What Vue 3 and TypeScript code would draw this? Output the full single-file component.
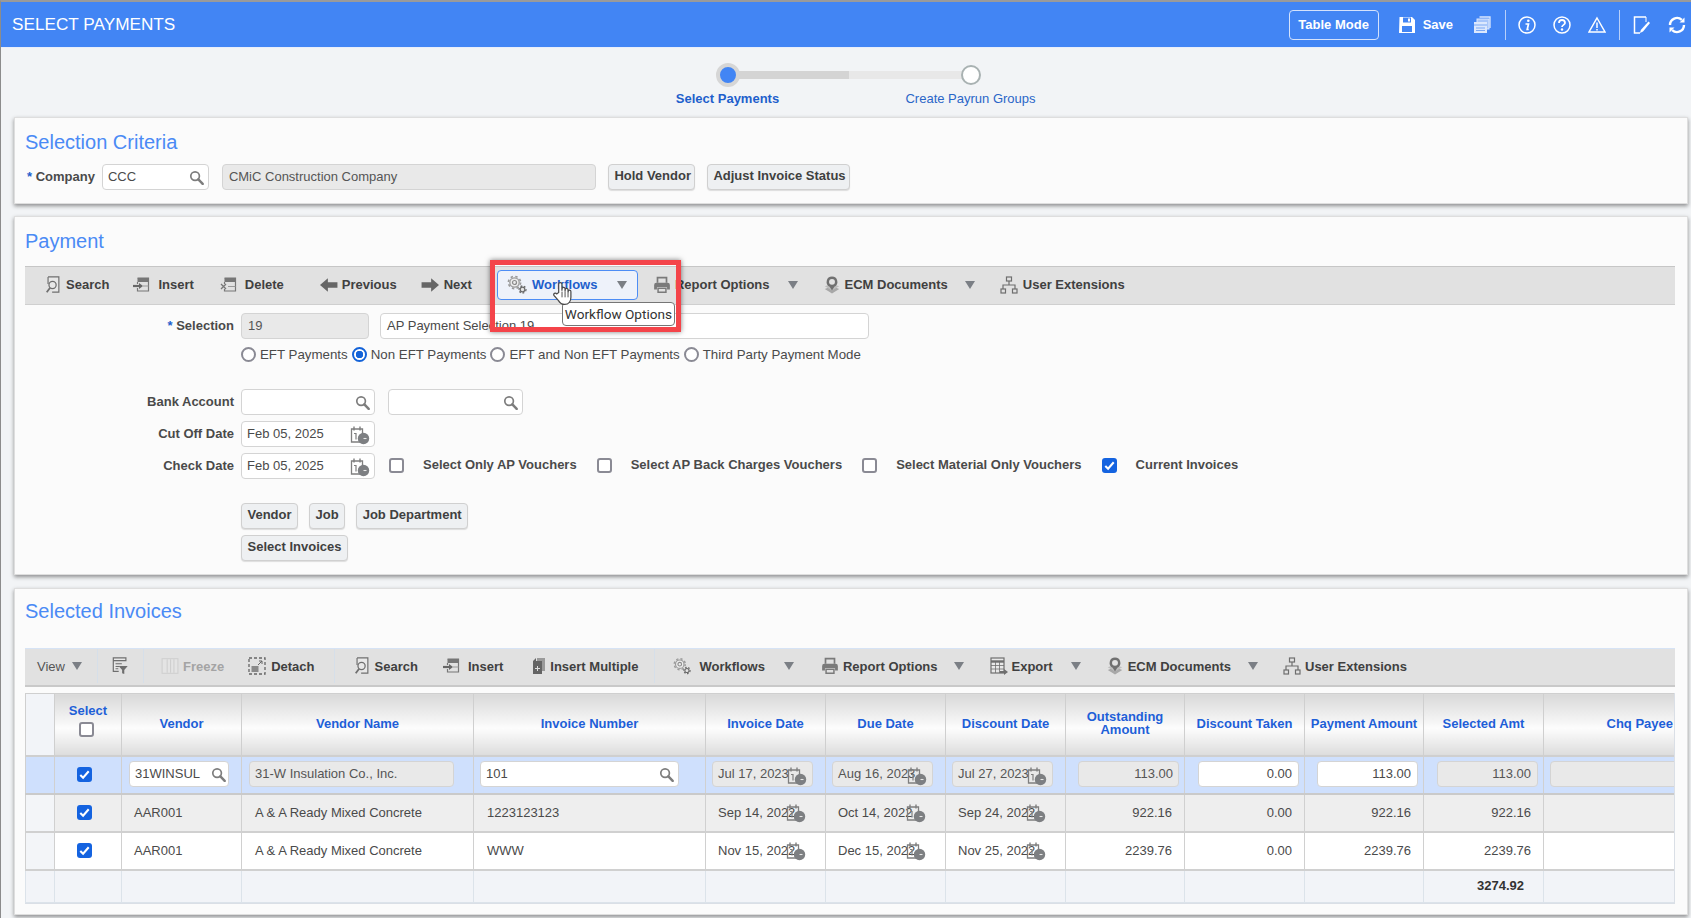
<script setup lang="ts">
interface ToolItem {
  ml: number;
  icon?: string;
  iw?: number;
  label?: string;
  caret?: number;
  sep?: boolean;
  muted?: boolean;
}

// ml = space before the item, iw = slot for the icon, caret = space before the arrow
const paymentTools: ToolItem[] = [
  { ml: 19, icon: 'i-docsearch', iw: 22, label: 'Search' },
  { ml: 24, icon: 'i-insert', iw: 25, label: 'Insert' },
  { ml: 26, icon: 'i-delete', iw: 25, label: 'Delete' },
  { ml: 36, icon: 'i-left', iw: 22, label: 'Previous' },
  { ml: 24, icon: 'i-right', iw: 23, label: 'Next' },
];

const paymentToolsEnd: ToolItem[] = [
  { ml: 15, icon: 'i-print', iw: 22, label: 'Report Options', caret: 18 },
  { ml: 25, icon: 'i-ecm', iw: 22, label: 'ECM Documents', caret: 17 },
  { ml: 25, icon: 'i-ue', iw: 23, label: 'User Extensions' },
];

const invoiceTools: ToolItem[] = [
  { ml: 12, label: 'View', caret: 7 },
  { ml: 15, sep: true },
  { ml: 14, icon: 'i-filter', iw: 17 },
  { ml: 14, sep: true },
  { ml: 17, icon: 'i-freeze', iw: 22, label: 'Freeze', muted: true },
  { ml: 24, icon: 'i-detach', iw: 23, label: 'Detach' },
  { ml: 19, sep: true },
  { ml: 18, icon: 'i-docsearch', iw: 22, label: 'Search' },
  { ml: 25, icon: 'i-insert', iw: 25, label: 'Insert' },
  { ml: 27, icon: 'i-multi', iw: 20, label: 'Insert Multiple' },
  { ml: 16, sep: true },
  { ml: 18, icon: 'i-gears', iw: 26, label: 'Workflows', caret: 19 },
  { ml: 27, icon: 'i-print', iw: 22, label: 'Report Options', caret: 16 },
  { ml: 26, icon: 'i-export', iw: 22, label: 'Export', caret: 18 },
  { ml: 25, icon: 'i-ecm', iw: 22, label: 'ECM Documents', caret: 17 },
  { ml: 25, icon: 'i-ue', iw: 22, label: 'User Extensions' },
];

const paymentModes = [
  { label: 'EFT Payments', on: false },
  { label: 'Non EFT Payments', on: true },
  { label: 'EFT and Non EFT Payments', on: false },
  { label: 'Third Party Payment Mode', on: false },
];

const voucherChecks = [
  { label: 'Select Only AP Vouchers', on: false },
  { label: 'Select AP Back Charges Vouchers', on: false },
  { label: 'Select Material Only Vouchers', on: false },
  { label: 'Current Invoices', on: true },
];

const columnWidths = [29, 67, 120, 232, 232, 120, 120, 120, 119, 120, 119, 120, 132];

const rows = [
  { vendor: 'AAR001', name: 'A & A Ready Mixed Concrete', invoice: '1223123123', invoiceDate: 'Sep 14, 2022', due: 'Oct 14, 2022', discount: 'Sep 24, 2022', outstanding: '922.16', taken: '0.00', payment: '922.16', selected: '922.16' },
  { vendor: 'AAR001', name: 'A & A Ready Mixed Concrete', invoice: 'WWW', invoiceDate: 'Nov 15, 2022', due: 'Dec 15, 2022', discount: 'Nov 25, 2022', outstanding: '2239.76', taken: '0.00', payment: '2239.76', selected: '2239.76' },
];
</script>

<template>
  <div class="page">
    <svg class="sprites" xmlns="http://www.w3.org/2000/svg">
      <symbol id="i-mag" viewBox="0 0 16 16">
        <circle cx="6.5" cy="6.5" r="4.6" fill="none" stroke="#7d7d7d" stroke-width="1.8" />
        <path d="M10 10l4.6 4.8" stroke="#7d7d7d" stroke-width="2.6" stroke-linecap="round" />
      </symbol>
      <symbol id="i-docsearch" viewBox="0 0 18 20">
        <path d="M3.5 1h12v17H8" fill="#e8e8e8" stroke="#6f6f6f" stroke-width="1.3" />
        <path d="M3.5 1v8" stroke="#6f6f6f" stroke-width="1.3" />
        <circle cx="8.5" cy="10" r="4" fill="#e8e8e8" stroke="#6f6f6f" stroke-width="1.4" />
        <path d="M5.8 13L2 18" stroke="#6f6f6f" stroke-width="2" />
      </symbol>
      <symbol id="i-insert" viewBox="0 0 18 18">
        <rect x="4.5" y="2" width="11" height="4" fill="#777" />
        <path d="M4.5 2h11v13h-11v-3M4.5 8V6" fill="none" stroke="#777" stroke-width="1.2" />
        <path d="M0 10h7" stroke="#666" stroke-width="2.2" />
        <path d="M6 7l4 3-4 3z" fill="#666" />
        <path d="M10 10h5.5" stroke="#999" stroke-width="1" />
      </symbol>
      <symbol id="i-delete" viewBox="0 0 18 18">
        <rect x="4.5" y="2" width="11" height="4" fill="#777" />
        <path d="M4.5 2h11v13h-11v-2M4.5 8V6" fill="none" stroke="#777" stroke-width="1.2" />
        <path d="M1 8l5 5M6 8l-5 5" stroke="#777" stroke-width="1.3" />
        <path d="M8 10.5h7.5" stroke="#999" stroke-width="1" />
      </symbol>
      <symbol id="i-left" viewBox="0 0 16 16"><path d="M0 8l7-6v3.5h8.500v5H7V14z" fill="#666" /></symbol>
      <symbol id="i-right" viewBox="0 0 16 16"><path d="M16 8L9 2v3.500H.5v5H9V14z" fill="#666" /></symbol>
      <symbol id="i-gears" viewBox="0 0 20 19">
        <circle cx="7.5" cy="7.5" r="4.7" fill="#ececec" stroke="#9a9a9a" stroke-width="1.300" />
        <circle cx="7.5" cy="7.5" r="6.100" fill="none" stroke="#9a9a9a" stroke-width="1.600" stroke-dasharray="2.400 2.400" />
        <circle cx="7.500" cy="7.500" r="2" fill="none" stroke="#8a8a8a" stroke-width="1.200" />
        <circle cx="15.500" cy="14.500" r="2.300" fill="#e6e6e6" stroke="#6a6a6a" stroke-width="1.200" />
        <circle cx="15.500" cy="14.500" r="3.500" fill="none" stroke="#6a6a6a" stroke-width="1.300" stroke-dasharray="1.800 1.700" />
      </symbol>
      <symbol id="i-print" viewBox="0 0 16 16">
        <path d="M4 6V1.500h8V6" fill="none" stroke="#7a7a7a" stroke-width="1.500" />
        <path d="M3 6h10a2 2 0 012 2v4h-2.500v-2h-9v2H1V8a2 2 0 012-2z" fill="#7a7a7a" />
        <path d="M4.500 11h7v3.500h-7z" fill="none" stroke="#7a7a7a" stroke-width="1.300" />
      </symbol>
      <symbol id="i-ecm" viewBox="0 0 18 20">
        <path d="M1 14.500l8-3.500 8 3.500-8 5z" fill="#a8a8a8" />
        <path d="M1 11.500l8-3 8 3-8 4.500z" fill="#bdbdbd" />
        <path d="M9 .5a6 6 0 00-2.600 11.400L9 16l2.600-4.100A6 6 0 009 .5z" fill="#707070" />
        <circle cx="9" cy="6.500" r="3.300" fill="#e2e2e2" />
      </symbol>
      <symbol id="i-ue" viewBox="0 0 18 18">
        <rect x="6.500" y="1" width="5" height="4" fill="none" stroke="#6e6e6e" stroke-width="1.200" />
        <path d="M9 5v4M3 13V9h12v4" fill="none" stroke="#6e6e6e" stroke-width="1.200" />
        <rect x="1" y="13" width="4.500" height="4" fill="none" stroke="#6e6e6e" stroke-width="1.200" />
        <rect x="12.500" y="13" width="4.500" height="4" fill="none" stroke="#6e6e6e" stroke-width="1.200" />
      </symbol>
      <symbol id="i-filter" viewBox="0 0 18 20">
        <path d="M1 1h14v3H1zM1 4v12h6" fill="#e8e8e8" stroke="#6e6e6e" stroke-width="1.300" />
        <path d="M3.500 7.500h7M3.500 10.500h4M3.500 13h3" stroke="#6e6e6e" stroke-width="1.200" />
        <path d="M7 10h10l-3.800 4.500V19l-2.400-1v-3.500z" fill="#6e6e6e" />
      </symbol>
      <symbol id="i-freeze" viewBox="0 0 16 16">
        <rect x="1" y="1.500" width="14" height="13" fill="#e4e4e4" stroke="#d0d0d0" />
        <path d="M5.500 2v12M8.500 2v12M11.500 2v12" stroke="#cfcfcf" stroke-width="1" />
      </symbol>
      <symbol id="i-detach" viewBox="0 0 18 18">
        <rect x="1" y="1" width="16" height="16" fill="none" stroke="#666" stroke-width="1.300" stroke-dasharray="3 2" />
        <rect x="3.500" y="9" width="7" height="6" fill="#8a8a8a" />
        <path d="M10 8l4-4M11 4h3v3" fill="none" stroke="#666" stroke-width="1" />
      </symbol>
      <symbol id="i-multi" viewBox="0 0 14 18">
        <path d="M5 1h8v13H5z" fill="#9a9a9a" />
        <path d="M4 1L1 4v13h9V4H4z" fill="#646464" />
        <path d="M5.500 9v5M3 11.500h5" stroke="#ddd" stroke-width="1" />
      </symbol>
      <symbol id="i-export" viewBox="0 0 18 18">
        <rect x="1" y="1" width="13" height="15" fill="#e8e8e8" stroke="#6e6e6e" stroke-width="1.200" />
        <path d="M1 4.500h13" stroke="#6e6e6e" stroke-width="2.400" />
        <path d="M5.500 5v11M9.500 5v11M1 8.500h13M1 12h13" stroke="#6e6e6e" stroke-width=".8" />
        <path d="M10 14h4v-2l4 3-4 3v-2h-4z" fill="#6e6e6e" />
      </symbol>
      <symbol id="i-cal" viewBox="0 0 20 20">
        <path d="M1.500 4h11v13h-11z" fill="none" stroke="#7f7f7f" stroke-width="1.300" />
        <path d="M4 1.500v4M10 1.500v4" stroke="#7f7f7f" stroke-width="1.400" />
        <path d="M4 8.500h2v6" fill="none" stroke="#7f7f7f" stroke-width="1.200" />
        <circle cx="13.500" cy="13.500" r="5.700" fill="#7d7f82" />
        <path d="M13.500 13.500h3" stroke="#e8e8e8" stroke-width="1.100" />
      </symbol>
      <symbol id="i-save" viewBox="0 0 18 18">
        <path d="M1.500 1h12.500L17 4v13H1z" fill="#fff" />
        <rect x="5" y="1.500" width="8" height="5" fill="#4285f4" />
        <rect x="10" y="2.500" width="2" height="3" fill="#fff" />
        <rect x="4" y="10" width="10" height="6" fill="#4285f4" />
      </symbol>
      <symbol id="i-copies" viewBox="0 0 18 18">
        <path d="M6.500 1h10.500v11" fill="none" stroke="#dce8fd" stroke-width="1.300" />
        <rect x="4" y="3" width="12" height="10" fill="#a8c6fa" stroke="#dce8fd" />
        <rect x="1" y="6" width="13" height="11" fill="#dce8fd" />
        <path d="M1 9h13M3 12h9M3 14.500h9" stroke="#7ba8f5" stroke-width="1" />
      </symbol>
      <symbol id="i-info" viewBox="0 0 18 18">
        <circle cx="9" cy="9" r="8" fill="none" stroke="#fff" stroke-width="1.500" />
        <circle cx="10.300" cy="4.800" r="1.300" fill="#fff" />
        <path d="M7.500 8h3l-1.300 5.500h1.500" fill="none" stroke="#fff" stroke-width="1.700" />
      </symbol>
      <symbol id="i-help" viewBox="0 0 18 18">
        <circle cx="9" cy="9" r="8" fill="none" stroke="#fff" stroke-width="1.500" />
        <path d="M6 7a3 3 0 116 0c0 1.800-3 2-3 4" fill="none" stroke="#fff" stroke-width="1.800" />
        <circle cx="9" cy="13.500" r="1.200" fill="#fff" />
      </symbol>
      <symbol id="i-warn" viewBox="0 0 18 18">
        <path d="M9 2L17 16H1z" fill="none" stroke="#fff" stroke-width="1.500" />
        <path d="M9 6.500v5.500M9 13v1.500" stroke="#fff" stroke-width="1.500" />
      </symbol>
      <symbol id="i-edit" viewBox="0 0 18 18">
        <path d="M13 1H1.500v16H7" fill="none" stroke="#fff" stroke-width="1.500" />
        <path d="M13 1v5" stroke="#fff" stroke-width="1" />
        <path d="M15.500 5.500L17 7 10 15.500l-3 1.500.8-3z" fill="#fff" />
      </symbol>
      <symbol id="i-refresh" viewBox="0 0 18 18">
        <path d="M2 9A7 7 0 0113.800 3.900" fill="none" stroke="#fff" stroke-width="2.400" />
        <path d="M16 9A7 7 0 014.200 14.100" fill="none" stroke="#fff" stroke-width="2.400" />
        <path d="M16.500 1.500v5h-5zM1.500 16.500v-5h5z" fill="#fff" />
      </symbol>
    </svg>

    <header class="topbar">
      <span class="topbar__title">SELECT PAYMENTS</span>
      <button class="topbar__mode">Table Mode</button>
      <svg class="topbar__icon topbar__icon--save"><use href="#i-save" /></svg>
      <span class="topbar__save">Save</span>
      <svg class="topbar__icon topbar__icon--copies"><use href="#i-copies" /></svg>
      <span class="topbar__sep topbar__sep--first"></span>
      <svg class="topbar__icon topbar__icon--info"><use href="#i-info" /></svg>
      <svg class="topbar__icon topbar__icon--next"><use href="#i-help" /></svg>
      <svg class="topbar__icon topbar__icon--next"><use href="#i-warn" /></svg>
      <span class="topbar__sep"></span>
      <svg class="topbar__icon topbar__icon--edit"><use href="#i-edit" /></svg>
      <svg class="topbar__icon topbar__icon--next"><use href="#i-refresh" /></svg>
    </header>

    <div class="steps">
      <div class="step step--active">
        <span class="step__dot"></span>
        <span class="step__label">Select Payments</span>
      </div>
      <div class="step">
        <span class="step__dot"></span>
        <span class="step__label">Create Payrun Groups</span>
      </div>
    </div>

    <section class="card card--criteria">
      <h2 class="card__title">Selection Criteria</h2>
      <div class="criteria">
        <label class="criteria__label"><i>*</i> Company</label>
        <div class="field field--company">
          <span>CCC</span>
          <svg class="mag"><use href="#i-mag" /></svg>
        </div>
        <div class="field field--off field--name"><span>CMiC Construction Company</span></div>
        <button class="btn btn--hold">Hold Vendor</button>
        <button class="btn btn--adjust">Adjust Invoice Status</button>
      </div>
    </section>

    <section class="card card--payment">
      <h2 class="card__title">Payment</h2>

      <div class="toolbar">
        <div v-for="item in paymentTools" :key="item.label" class="tool" :style="{ marginLeft: item.ml + 'px' }">
          <span class="tool__slot" :style="{ width: item.iw + 'px' }">
            <svg class="tool__icon"><use :href="'#' + item.icon" /></svg>
          </span>
          <span>{{ item.label }}</span>
        </div>

        <div class="wf">
          <button class="wf__btn">
            <svg class="wf__icon"><use href="#i-gears" /></svg>
            <span>Workflows</span>
            <span class="caret wf__caret"></span>
          </button>
          <div class="wf__tip">Workflow Options</div>
          <svg class="wf__hand" viewBox="0 0 22 26">
            <path d="M7 12V3.200a1.700 1.700 0 013.400 0V10l.1-2a1.600 1.600 0 013.200.2V11l.1-2a1.500 1.500 0 013 .2V12l.2-1.300a1.400 1.400 0 012.800.3V17c0 4-2.300 7.500-6.500 7.500-3.300 0-5-1.300-6.500-4L2 15c-1-1.800 1.500-3.300 3-1.500z" fill="#fff" stroke="#4a4a4a" stroke-width="1.300" />
            <path d="M10.500 11v6M13.700 11v6M16.800 12v5" stroke="#4a4a4a" stroke-width="1" />
          </svg>
          <div class="wf__mark"></div>
        </div>

        <div v-for="item in paymentToolsEnd" :key="item.label" class="tool" :style="{ marginLeft: item.ml + 'px' }">
          <span class="tool__slot" :style="{ width: item.iw + 'px' }">
            <svg class="tool__icon"><use :href="'#' + item.icon" /></svg>
          </span>
          <span>{{ item.label }}</span>
          <span v-if="item.caret" class="caret" :style="{ marginLeft: item.caret + 'px' }"></span>
        </div>
      </div>

      <div class="form">
        <div class="form__row form__row--selection">
          <label class="form__label"><i>*</i> Selection</label>
          <div class="field field--off field--selno"><span>19</span></div>
          <div class="field field--seldesc"><span>AP Payment Selection 19</span></div>
        </div>

        <div class="form__modes">
          <label v-for="mode in paymentModes" :key="mode.label" class="mode">
            <span class="radio" :class="{ 'radio--on': mode.on }"></span>
            <span>{{ mode.label }}</span>
          </label>
        </div>

        <div class="form__row form__row--bank">
          <label class="form__label">Bank Account</label>
          <div class="field field--date"><svg class="mag"><use href="#i-mag" /></svg></div>
          <div class="field field--date field--bank2"><svg class="mag"><use href="#i-mag" /></svg></div>
        </div>

        <div class="form__row">
          <label class="form__label">Cut Off Date</label>
          <div class="field field--date">
            <span>Feb 05, 2025</span>
            <svg class="cal"><use href="#i-cal" /></svg>
          </div>
        </div>

        <div class="form__row">
          <label class="form__label">Check Date</label>
          <div class="field field--date">
            <span>Feb 05, 2025</span>
            <svg class="cal"><use href="#i-cal" /></svg>
          </div>
          <label v-for="check in voucherChecks" :key="check.label" class="voucher">
            <span class="check" :class="{ 'check--on': check.on }">
              <svg v-if="check.on" viewBox="0 0 16 16"><path d="M3.500 8.500l3 3 6-7" fill="none" stroke="#fff" stroke-width="2.200" /></svg>
            </span>
            <span>{{ check.label }}</span>
          </label>
        </div>

        <div class="form__row form__row--actions">
          <button class="btn">Vendor</button>
          <button class="btn">Job</button>
          <button class="btn">Job Department</button>
        </div>
        <div class="form__row form__row--actions2">
          <button class="btn">Select Invoices</button>
        </div>
      </div>
    </section>

    <section class="card card--invoices">
      <h2 class="card__title">Selected Invoices</h2>

      <div class="toolbar toolbar--table">
        <template v-for="(item, i) in invoiceTools" :key="i">
          <span v-if="item.sep" class="toolbar__sep" :style="{ marginLeft: item.ml + 'px' }"></span>
          <div v-else class="tool" :class="{ 'tool--muted': item.muted, 'tool--plain': item.label === 'View' }" :style="{ marginLeft: item.ml + 'px' }">
            <span v-if="item.icon" class="tool__slot" :style="{ width: item.iw + 'px' }">
              <svg class="tool__icon"><use :href="'#' + item.icon" /></svg>
            </span>
            <span v-if="item.label">{{ item.label }}</span>
            <span v-if="item.caret" class="caret" :style="{ marginLeft: item.caret + 'px' }"></span>
          </div>
        </template>
      </div>

      <div class="grid-wrap">
        <table class="grid">
          <colgroup>
            <col v-for="(w, i) in columnWidths" :key="i" :style="{ width: w + 'px' }" />
          </colgroup>
          <thead>
            <tr>
              <th></th>
              <th class="grid__select">
                Select
                <span class="check check--head"></span>
              </th>
              <th>Vendor</th>
              <th>Vendor Name</th>
              <th>Invoice Number</th>
              <th>Invoice Date</th>
              <th>Due Date</th>
              <th>Discount Date</th>
              <th>Outstanding<br />Amount</th>
              <th>Discount Taken</th>
              <th class="grid__tight">Payment Amount</th>
              <th>Selected Amt</th>
              <th class="grid__payee">Chq Payee</th>
            </tr>
          </thead>
          <tbody>
            <tr class="row--current">
              <td></td>
              <td><span class="check check--on check--cell"><svg viewBox="0 0 16 16"><path d="M3.500 8.500l3 3 6-7" fill="none" stroke="#fff" stroke-width="2.200" /></svg></span></td>
              <td>
                <div class="field cell-vendor"><span>31WINSUL</span><svg class="mag mag--tight"><use href="#i-mag" /></svg></div>
              </td>
              <td><div class="field field--off cell-name"><span>31-W Insulation Co., Inc.</span></div></td>
              <td>
                <div class="field cell-invoice"><span>101</span><svg class="mag"><use href="#i-mag" /></svg></div>
              </td>
              <td><div class="field field--off cell-date"><span>Jul 17, 2023</span><svg class="cal cal--over"><use href="#i-cal" /></svg></div></td>
              <td><div class="field field--off cell-date"><span>Aug 16, 2023</span><svg class="cal cal--over"><use href="#i-cal" /></svg></div></td>
              <td><div class="field field--off cell-date"><span>Jul 27, 2023</span><svg class="cal cal--over"><use href="#i-cal" /></svg></div></td>
              <td><div class="field field--off cell-num cell-num--out"><span>113.00</span></div></td>
              <td><div class="field cell-num cell-num--taken"><span>0.00</span></div></td>
              <td><div class="field cell-num cell-num--pay"><span>113.00</span></div></td>
              <td><div class="field field--off cell-num cell-num--sel"><span>113.00</span></div></td>
              <td><div class="field field--off cell-payee"></div></td>
            </tr>
            <tr v-for="(row, i) in rows" :key="i" :class="i === 0 ? 'row--grey' : 'row--white'">
              <td class="grid__head"></td>
              <td><span class="check check--on check--cell"><svg viewBox="0 0 16 16"><path d="M3.500 8.500l3 3 6-7" fill="none" stroke="#fff" stroke-width="2.200" /></svg></span></td>
              <td class="txt txt--vendor">{{ row.vendor }}</td>
              <td class="txt txt--name">{{ row.name }}</td>
              <td class="txt txt--invoice">{{ row.invoice }}</td>
              <td class="txt txt--date">{{ row.invoiceDate }}<svg class="cal cal--cell"><use href="#i-cal" /></svg></td>
              <td class="txt txt--date">{{ row.due }}<svg class="cal cal--cell"><use href="#i-cal" /></svg></td>
              <td class="txt txt--date">{{ row.discount }}<svg class="cal cal--cell"><use href="#i-cal" /></svg></td>
              <td class="txt txt--num">{{ row.outstanding }}</td>
              <td class="txt txt--num">{{ row.taken }}</td>
              <td class="txt txt--num">{{ row.payment }}</td>
              <td class="txt txt--num">{{ row.selected }}</td>
              <td></td>
            </tr>
          </tbody>
          <tfoot>
            <tr>
              <td v-for="n in 11" :key="n"></td>
              <td class="grid__total">3274.92</td>
              <td></td>
            </tr>
          </tfoot>
        </table>
      </div>
    </section>
  </div>
</template>

<style scoped>
.page {
  position: relative;
  width: 1691px;
  height: 918px;
  box-sizing: border-box;
  overflow: hidden;
  background: #f2f4f6;
  border-top: 2px solid #9a9a9a;
  border-left: 1px solid #8c8c8c;
  font-family: "Liberation Sans", Arial, sans-serif;
  font-size: 13px;
  color: #4a4a4a;
}

.sprites {
  display: none;
}

/* top bar */
.topbar {
  display: flex;
  align-items: center;
  height: 45px;
  background: #4285f4;
  border-bottom: 1px solid #e8eefb;
  color: #fff;
}

.topbar__title {
  margin-left: 11px;
  margin-right: auto;
  font-size: 17.2px;
}

.topbar__mode {
  width: 90px;
  height: 30px;
  border: 1.5px solid #d4e2fc;
  border-radius: 4px;
  background: transparent;
  color: #fff;
  font: bold 13px "Liberation Sans", sans-serif;
}

.topbar__icon {
  width: 18px;
  height: 18px;
  flex: none;
}

.topbar__icon--save {
  margin-left: 19px;
}

.topbar__save {
  margin-left: 7px;
  font-weight: 700;
}

.topbar__icon--copies {
  margin-left: 20px;
}

.topbar__sep {
  width: 1px;
  height: 30px;
  margin-left: 13px;
  background: #b8d0fa;
}

.topbar__sep--first {
  margin-left: 14px;
}

.topbar__icon--info {
  margin-left: 12px;
}

.topbar__icon--next {
  margin-left: 17px;
}

.topbar__icon--edit {
  margin-left: 13px;
}

.topbar__icon--next:last-child {
  margin-right: 5px;
}

/* stepper */
.steps {
  display: flex;
  justify-content: flex-start;
  height: 69px;
  padding-left: 605px;
}

.step {
  position: relative;
  display: flex;
  flex-direction: column;
  align-items: center;
  width: 243px;
  padding-top: 15px;
  box-sizing: border-box;
}

.step:first-child::after {
  content: "";
  position: absolute;
  left: 121px;
  top: 23px;
  width: 243px;
  height: 8px;
  background: linear-gradient(90deg, #d4d4d4 50%, #e8e8e8 50%);
}

.step__dot {
  z-index: 1;
  width: 16px;
  height: 16px;
  border-radius: 50%;
  background: #fff;
  border: 2px solid #a9b2b2;
  margin-top: 2px;
  margin-bottom: 6px;
}

.step--active .step__dot {
  width: 16px;
  height: 16px;
  margin-top: 0;
  margin-bottom: 4px;
  background: #4285f4;
  border: 4px solid #d6d6d6;
}

.step__label {
  font-size: 13px;
  color: #2a66c8;
}

.step--active .step__label {
  font-weight: 700;
  color: #1e5fcc;
}

/* cards */
.card {
  margin-left: 13px;
  width: 1674px;
  box-sizing: border-box;
  padding: 0 12px 0 10px;
  background: #fbfbfb;
  border: 1px solid #dedede;
  box-shadow: 0 2px 4px rgba(0, 0, 0, 0.42);
}

.card__title {
  margin: 0;
  height: 24px;
  line-height: 24px;
  font-size: 20px;
  font-weight: 400;
  color: #4a8af5;
}

.card--criteria {
  height: 87px;
  padding-top: 12px;
}

.card--payment {
  height: 359px;
  margin-top: 12px;
  padding-top: 12px;
}

.card--payment .toolbar {
  margin-top: 13px;
}

.card--invoices {
  height: 327px;
  margin-top: 13px;
  padding-top: 10px;
}

.card--invoices .toolbar {
  margin-top: 25px;
}

.criteria {
  display: flex;
  align-items: center;
  height: 26px;
  margin-top: 10px;
}

.criteria__label {
  margin-left: 2px;
  margin-right: 7px;
  padding-bottom: 1px;
  font-weight: 700;
}

.criteria__label i,
.form__label i {
  font-style: normal;
  color: #1e5fcc;
}

/* inputs */
.field {
  position: relative;
  display: flex;
  align-items: center;
  height: 26px;
  box-sizing: border-box;
  padding: 0 6px 2px;
  background: #fff;
  border: 1px solid #d4d4d4;
  border-radius: 4px;
  color: #4a4a4a;
}

.field--off {
  background: #e9e9e9;
  color: #555;
}

.field--company {
  width: 107px;
  padding-left: 5px;
}

.field--name {
  width: 374px;
  margin-left: 13px;
}

.mag {
  position: absolute;
  right: 4px;
  top: 5px;
  width: 15px;
  height: 15px;
}

.mag--tight {
  right: 2px;
}

.cal {
  position: absolute;
  right: 4px;
  top: 3px;
  width: 20px;
  height: 20px;
}

.btn {
  height: 26px;
  padding: 0 5.5px 3px;
  background: #eef0f2;
  border: 1px solid #d0d0d0;
  border-radius: 4px;
  box-shadow: 0 1px 1px rgba(0, 0, 0, 0.12);
  color: #404040;
  font: bold 13px "Liberation Sans", sans-serif;
  white-space: nowrap;
}

.btn--hold {
  margin-left: 12px;
  width: 87px;
}

.btn--adjust {
  margin-left: 12px;
  width: 143px;
}

/* toolbars */
.toolbar {
  display: flex;
  align-items: center;
  height: 39px;
  margin-top: 12px;
  padding-bottom: 2px;
  box-sizing: border-box;
  background: #e1e1e1;
  border-top: 1px solid #c6c6c6;
  border-bottom: 1px solid #cfcfcf;
  color: #404040;
  font-weight: 700;
  white-space: nowrap;
}

.toolbar--table {
  border-top-color: #d6e3f5;
  border-bottom: 2px solid #c9c9c9;
}

.toolbar__sep {
  align-self: stretch;
  flex: none;
  width: 1px;
  background: #d6dfe9;
}

.tool {
  display: flex;
  align-items: center;
  flex: none;
}

.tool--muted {
  color: #a4a4a4;
}

.tool--plain {
  font-weight: 400;
  color: #555;
}

.tool__slot {
  display: flex;
  align-items: center;
  flex: none;
}

.tool__icon {
  width: 18px;
  height: 18px;
}

.caret {
  flex: none;
  width: 0;
  height: 0;
  border-left: 5px solid transparent;
  border-right: 5px solid transparent;
  border-top: 8px solid #7b7f85;
}

/* hovered Workflows button with its annotation */
.wf {
  position: relative;
  flex: none;
  margin-left: 25px;
}

.wf__btn {
  display: flex;
  align-items: center;
  width: 141px;
  height: 30px;
  padding: 0;
  background: #eef2fa;
  border: 1px solid #4d8df5;
  border-radius: 4px;
  color: #1e5fcc;
  font: bold 13px "Liberation Sans", sans-serif;
}

.wf__icon {
  width: 20px;
  height: 19px;
  margin-left: 9px;
  margin-right: 5px;
}

.wf__caret {
  margin-left: auto;
  margin-right: 10px;
}

.wf__tip {
  position: absolute;
  z-index: 3;
  left: 65px;
  top: 32px;
  width: 113px;
  height: 24px;
  box-sizing: border-box;
  line-height: 22px;
  text-align: center;
  background: #fff;
  border: 1px solid #767676;
  border-radius: 4px;
  color: #333;
  font-family: Roboto, sans-serif;
  font-size: 13.6px;
  font-weight: 400;
}

.wf__hand {
  position: absolute;
  z-index: 4;
  left: 55px;
  top: 11px;
  width: 21px;
  height: 25px;
}

.wf__mark {
  position: absolute;
  z-index: 5;
  left: -7px;
  top: -10px;
  width: 191px;
  height: 72px;
  box-sizing: border-box;
  border: 5px solid #f4444a;
  box-shadow: 0 0 5px rgba(0, 0, 0, 0.5);
  pointer-events: none;
}

/* form */
.form__row {
  display: flex;
  align-items: center;
  height: 26px;
  margin-top: 6px;
}

.form__row--selection {
  margin-top: 8px;
}

.form__label {
  width: 209px;
  margin-right: 7px;
  padding-bottom: 2px;
  flex: none;
  text-align: right;
  font-weight: 700;
}

.field--selno {
  width: 128px;
  padding-left: 6px;
}

.field--seldesc {
  width: 489px;
  margin-left: 11px;
}

.form__modes {
  display: flex;
  align-items: center;
  height: 18px;
  margin-top: 6px;
  margin-left: 216px;
}

.mode {
  display: flex;
  align-items: center;
  margin-right: 4px;
  font-size: 13.3px;
}

.radio {
  flex: none;
  width: 15px;
  height: 15px;
  box-sizing: border-box;
  margin-right: 4px;
  border: 2px solid #8a8a94;
  border-radius: 50%;
  background: #fff;
}

.radio--on {
  border-color: #1463d8;
  background: radial-gradient(circle, #1463d8 0 3.5px, #fff 4px);
}

.form__row--bank {
  margin-top: 26px;
}

.field--date {
  width: 134px;
  flex: none;
  padding-left: 5px;
}

.field--bank2 {
  width: 135px;
  margin-left: 13px;
}

.voucher {
  display: flex;
  align-items: center;
  padding-bottom: 1px;
  font-weight: 700;
  margin-left: 14px;
}

.voucher + .voucher {
  margin-left: 20px;
}

.voucher span:last-child {
  padding-bottom: 2px;
}

.check {
  display: inline-block;
  flex: none;
  width: 15px;
  height: 15px;
  box-sizing: border-box;
  margin-right: 19px;
  border: 2px solid #8a8a94;
  border-radius: 3px;
  background: #fff;
}

.check svg {
  display: block;
  width: 15px;
  height: 15px;
}

.check--on {
  border: 0;
  background: #1463e0;
}

.form__row--actions {
  margin-top: 24px;
  padding-left: 216px;
  gap: 11px;
}

.form__row--actions2 {
  padding-left: 216px;
}

/* grid */
.grid-wrap {
  margin-top: 6px;
  width: 1650px;
  overflow: hidden;
  border-bottom: 1px solid #dadfe6;
  border-right: 1px solid #dadfe6;
  box-sizing: border-box;
}

.grid {
  width: 1650px;
  table-layout: fixed;
  border-collapse: collapse;
}

.grid th {
  box-sizing: border-box;
  height: 62px;
  padding: 0 0 2px;
  border: 1px solid #cfcfcf;
  border-bottom-width: 2px;
  background: linear-gradient(#d9d9d9, #f5f5f5 45%, #fdfdfd 55%, #dcdcdc);
  color: #1e5fd8;
  font-size: 13px;
  font-weight: 700;
  line-height: 13px;
  text-align: center;
}

.grid th:first-child {
  background: #f2f4f8;
}

.grid th.grid__select {
  padding-bottom: 8px;
}

.grid__select .check {
  display: block;
  margin: 5px auto 0 24px;
}

.grid__payee {
  text-align: right !important;
  padding-right: 2px !important;
}

.grid td {
  position: relative;
  padding: 0 0 1px;
  border: 1px solid #d0d0d0;
  border-bottom-width: 2px;
  white-space: nowrap;
  overflow: visible;
}

tbody tr {
  height: 38px;
}

.row--current td {
  background: #cfe0fd;
  border-bottom-color: #cacaca;
}

.row--grey td {
  background: #eeeeee;
}

.row--white td {
  background: #fff;
}

.grid td.grid__head {
  background: #f3f5f8;
}

.check--cell {
  display: block;
  margin: 0 0 0 22px;
}

.grid .field {
  padding-left: 5px;
}

.cell-vendor { width: 100px; margin-left: 7px; }
.cell-name { width: 205px; margin-left: 7px; }
.cell-invoice { width: 199px; margin-left: 6px; }
.cell-date { width: 101px; margin-left: 6px; white-space: nowrap; }
.cell-num { justify-content: flex-end; width: 101px; }
.cell-num--out { margin-left: 12px; padding-right: 5px; }
.cell-num--taken { margin-left: 13px; }
.cell-num--pay { margin-left: 12px; }
.cell-num--sel { margin-left: 13px; }
.cell-payee { width: 160px; margin-left: 6px; }

.cal--over {
  right: 5px;
  top: 4px;
}

.txt { padding: 0; }
.grid td.txt--vendor { padding-left: 12px; }
.grid td.txt--name { padding-left: 13px; }
.grid td.txt--invoice { padding-left: 13px; }
.grid td.txt--date { padding-left: 12px; }
.grid td.txt--num { padding-right: 12px; text-align: right; }

.cal--cell {
  right: 19px;
  top: 8px;
}

tfoot td {
  height: 30px;
  background: #f2f4f8;
  border-color: #dce3ea !important;
  border-bottom-width: 1px !important;
}

.grid td.grid__total {
  padding-right: 19px;
  text-align: right;
  font-weight: 700;
  color: #333;
}
</style>

<style>
html,
body {
  margin: 0;
  background: #f2f4f6;
}
</style>
